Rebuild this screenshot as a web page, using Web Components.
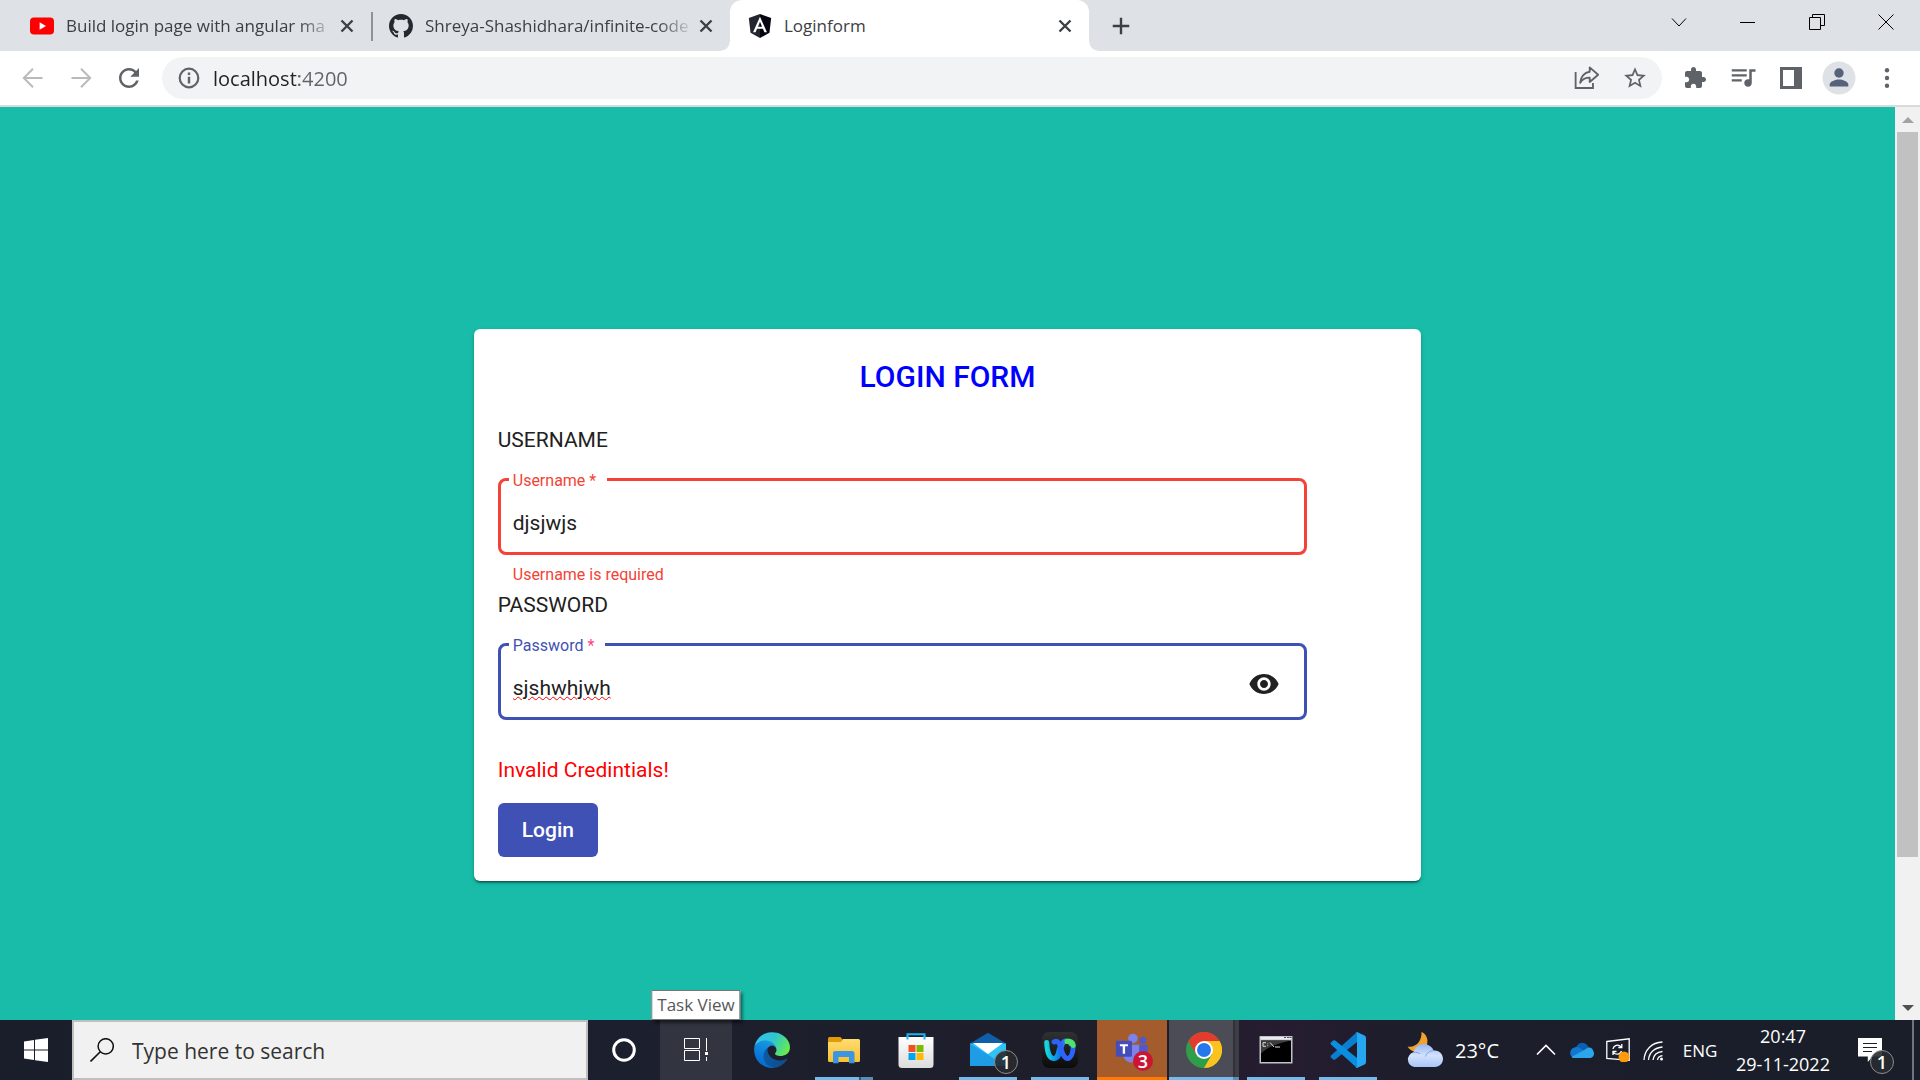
<!DOCTYPE html>
<html lang="en">
<head>
<meta charset="utf-8">
<title>Loginform</title>
<style>
  html, body { margin: 0; height: 100%; }
  body { display: flex; flex-direction: column; overflow: hidden; font-family: "Open Sans", "Noto Sans", sans-serif; }
</style>
</head>
<body>
<tab-strip>
  <browser-tab icon="youtube" label="Build login page with angular ma" faded></browser-tab>
  <browser-tab icon="github" label="Shreya-Shashidhara/infinite-code" divided faded></browser-tab>
  <browser-tab icon="angular" label="Loginform" active></browser-tab>
</tab-strip>
<browser-toolbar></browser-toolbar>
<page-view>
  <login-card>
    <span slot="title">LOGIN FORM</span>
    <outline-field heading="USERNAME" label="Username" value="djsjwjs" tone="error">Username is required</outline-field>
    <outline-field heading="PASSWORD" label="Password" value="sjshwhjwh" tone="focus"><ui-icon slot="suffix" name="eye" size="32"></ui-icon></outline-field>
    <span slot="error">Invalid Credintials!</span>
    <span slot="action">Login</span>
  </login-card>
</page-view>
<task-bar>
  <task-item icon="cortana" label="Cortana"></task-item>
  <task-item icon="taskview" label="Task View" state="hover" tip="Task View"></task-item>
  <task-item slot="apps" icon="edge" label="Edge"></task-item>
  <task-item slot="apps" icon="explorer" label="File Explorer" state="stack"></task-item>
  <task-item slot="apps" icon="store" label="Store"></task-item>
  <task-item slot="apps" icon="mail" label="Mail" state="open" badge="1"></task-item>
  <task-item slot="apps" icon="webex" label="Webex" state="open"></task-item>
  <task-item slot="apps" icon="teams" label="Teams" state="alert" badge="3"></task-item>
  <task-item slot="apps" icon="chrome" label="Chrome" state="current"></task-item>
  <task-item slot="apps" icon="cmd" label="Command Prompt" state="open"></task-item>
  <task-item slot="apps" icon="vscode" label="Visual Studio Code" state="open"></task-item>
</task-bar>
<script>
const line = (w, d, extra = '') => `<path d="${d}" fill="none" stroke="currentColor" stroke-width="${w}" ${extra}/>`;
const ICONS = {
  youtube: ['0 0 24 24', '<rect x="0" y="3.5" width="24" height="17" rx="4" fill="#f00"/><path d="M9.6 8.2v7.6l6.4-3.8z" fill="#fff"/>'],
  github: ['0 0 16 16', '<path fill="#24292f" d="M8 0C3.58 0 0 3.58 0 8c0 3.54 2.29 6.53 5.47 7.59.4.07.55-.17.55-.38 0-.19-.01-.82-.01-1.49-2.01.37-2.53-.49-2.69-.94-.09-.23-.48-.94-.82-1.13-.28-.15-.68-.52-.01-.53.63-.01 1.08.58 1.23.82.72 1.21 1.87.87 2.33.66.07-.52.28-.87.51-1.07-1.78-.2-3.64-.89-3.64-3.95 0-.87.31-1.59.82-2.15-.08-.2-.36-1.02.08-2.12 0 0 .67-.21 2.2.82.64-.18 1.32-.27 2-.27s1.36.09 2 .27c1.53-1.04 2.2-.82 2.2-.82.44 1.1.16 1.92.08 2.12.51.56.82 1.27.82 2.15 0 3.07-1.87 3.75-3.65 3.95.29.25.54.73.54 1.48 0 1.07-.01 1.93-.01 2.2 0 .21.15.46.55.38A8.01 8.01 0 0 0 16 8c0-4.42-3.58-8-8-8z"/>'],
  angular: ['25 30 200 200', '<path fill="#23252f" d="M125 30 31.9 63.2 46.1 186.3 125 230z"/><path fill="#05060f" d="M125 30v200l78.9-43.7 14.2-123.1z"/><path fill="#fff" d="M125 52.1 66.8 182.6h21.7l11.7-29.2h49.4l11.7 29.2H183L125 52.1zm17 83.3h-34l17-40.9z"/>'],
  close: ['0 0 24 24', line(2.4, 'M6.5 6.5l11 11M17.5 6.5l-11 11')],
  plus: ['0 0 24 24', line(2.6, 'M12 3v18M3 12h18')],
  winChevron: ['0 0 16 16', line(1, 'M1 4.5 8 12l7-7.5')],
  winMin: ['0 0 16 16', '<path d="M0 8h15v1H0z"/>'],
  winMax: ['0 0 16 16', line(1, 'M.5 3.5h11v12h-11zM3.5 3.5v-3h12v11h-4')],
  winClose: ['0 0 16 16', line(1, 'M.5.5l15 15M15.5.5l-15 15')],
  back: ['0 0 24 24', line(2, 'M21.5 12H3M12 2.7 2.8 12l9.2 9.3')],
  forward: ['0 0 24 24', line(2, 'M2.5 12H21M12 2.7l9.2 9.3-9.2 9.3')],
  reload: ['0 0 24 24', '<path fill="currentColor" d="M17.65 6.35C16.2 4.9 14.21 4 12 4c-4.42 0-7.99 3.58-7.99 8s3.57 8 7.99 8c3.73 0 6.84-2.55 7.73-6h-2.08c-.82 2.33-3.04 4-5.65 4-3.31 0-6-2.69-6-6s2.69-6 6-6c1.66 0 3.14.69 4.22 1.78L13 11h7V4z"/>'],
  info: ['0 0 24 24', '<circle cx="12" cy="12" r="9.3" fill="none" stroke="currentColor" stroke-width="2.2"/><path fill="currentColor" d="M10.8 6.5h2.4v2.4h-2.4zM10.8 10.8h2.4v6.7h-2.4z"/>'],
  share: ['0 0 24 24', line(1.7, 'M1.5 6.5v14.7h16v-4.5') + line(1.7, 'M14.5 2.2 22.3 9l-7.8 6.7v-4C10.5 11.7 7.5 13 5.7 16.5c.3-5.5 3.8-9.6 8.8-10.3z', 'stroke-linejoin="round"')],
  star: ['0 0 24 24', '<path fill="currentColor" d="M22 9.24l-7.19-.62L12 2 9.19 8.63 2 9.24l5.46 4.73L5.82 21 12 17.27 18.18 21l-1.63-7.03L22 9.24zM12 15.4l-3.76 2.27 1-4.28-3.32-2.88 4.38-.38L12 6.1l1.71 4.04 4.38.38-3.32 2.88 1 4.28L12 15.4z"/>'],
  puzzle: ['0 0 24 24', '<path fill="currentColor" d="M20.5 11H19V7c0-1.1-.9-2-2-2h-4V3.5C13 2.12 11.88 1 10.5 1S8 2.12 8 3.5V5H4c-1.1 0-1.99.9-1.99 2v3.8H3.5c1.49 0 2.7 1.21 2.7 2.7s-1.21 2.7-2.7 2.7H2V20c0 1.1.9 2 2 2h3.8v-1.5c0-1.49 1.21-2.7 2.7-2.7s2.7 1.21 2.7 2.7V22H17c1.1 0 2-.9 2-2v-4h1.5c1.38 0 2.5-1.12 2.5-2.5S21.88 11 20.5 11z"/>'],
  music: ['0 1 24 24', '<path fill="currentColor" d="M15 6H3v1.7h12zM15 10H3v1.7h12zM3 15.7h8V14H3zM17 6v8.18c-.31-.11-.65-.18-1-.18-1.66 0-3 1.34-3 3s1.34 3 3 3 3-1.34 3-3V8h3V6z"/>'],
  panel: ['0 0 22 22', '<path fill="currentColor" fill-rule="evenodd" d="M0 0h22v22H0zM3 3v16h11V3z"/>'],
  avatar: ['0 0 34 34', '<circle cx="17" cy="17" r="16.5" fill="#dee1e6"/><g fill="#56617a"><circle cx="17" cy="12" r="4.7"/><path d="M7.7 25.5v-2c0-3 6-5 9.3-5s9.3 2 9.3 5v2z"/></g>'],
  dots: ['0 0 24 24', '<g fill="currentColor"><circle cx="12" cy="4.3" r="2.2"/><circle cx="12" cy="12" r="2.2"/><circle cx="12" cy="19.7" r="2.2"/></g>'],
  eye: ['0 0 24 24', '<path fill="#212121" d="M12 4.5C7 4.5 2.73 7.61 1 12c1.73 4.39 6 7.5 11 7.5s9.27-3.11 11-7.5c-1.73-4.39-6-7.5-11-7.5zM12 17c-2.76 0-5-2.24-5-5s2.24-5 5-5 5 2.24 5 5-2.24 5-5 5zm0-8c-1.66 0-3 1.34-3 3s1.34 3 3 3 3-1.34 3-3-1.34-3-3-3z"/>'],
  windows: ['0 0 24 24', '<path fill="#fff" d="M0 3.4 10 2v9.4H0zM11 1.8 24 0v11.4H11zM0 12.4h10V22L0 20.6zM11 12.4h13V24l-13-1.8z"/>'],
  search: ['0 0 24 24', '<circle cx="15.7" cy="8.3" r="7.6" fill="none" stroke="#111" stroke-width="1.5"/><path d="M10.3 13.7.5 23.5" stroke="#111" stroke-width="1.6"/>'],
  cortana: ['0 0 36 36', '<circle cx="18" cy="18" r="10.3" fill="none" stroke="#fff" stroke-width="3"/>'],
  taskview: ['0 0 36 36', '<path fill="none" stroke="#fff" d="M6.5 6.5h15v10h-15zM6.500 18.5h15v10h-15zM28.5 6v13M28.5 25v4"/><path fill="#fff" d="M27 20h3v3h-3z"/>'],
  edge: ['4 4 257 257', '<defs><linearGradient id="a" x1="0" x2="1"><stop offset="0" stop-color="#0c59a4"/><stop offset="1" stop-color="#114a8b"/></linearGradient><linearGradient id="b" x1=".6" x2=".3" y2="1"><stop offset="0" stop-color="#1b9de2"/><stop offset=".6" stop-color="#0a79d8"/><stop offset="1" stop-color="#0668c4"/></linearGradient><linearGradient id="c" x1="0" y1=".2" x2="1" y2=".6"><stop offset="0" stop-color="#35c1f1"/><stop offset=".5" stop-color="#2fc5cf"/><stop offset="1" stop-color="#66eb4e"/></linearGradient></defs><path fill="url(#a)" d="M235.68 195.46a93.73 93.73 0 0 1-10.54 4.71 101.87 101.87 0 0 1-35.9 6.46c-47.32 0-88.54-32.55-88.54-74.32A31.48 31.48 0 0 1 117.13 105c-42.8 1.8-53.8 46.4-53.8 72.53 0 73.88 68.09 81.37 82.76 81.37 7.91 0 19.84-2.3 27-4.56l1.31-.44a128.34 128.34 0 0 0 66.6-52.8 4 4 0 0 0-5.32-5.64z"/><path fill="url(#b)" d="M110.34 246.34A79.2 79.2 0 0 1 87.6 225a80.72 80.72 0 0 1 29.53-120c3.12-1.47 8.45-4.13 15.54-4a32.35 32.35 0 0 1 25.69 13 31.88 31.88 0 0 1 6.36 18.66c0-.21 24.46-79.6-80-79.6-43.9 0-80 41.66-80 78.21a130.15 130.15 0 0 0 12.11 56 128 128 0 0 0 156.38 67.11 75.55 75.55 0 0 1-62.78-8z"/><path fill="url(#c)" d="M156.94 153.78c-.81 1.05-3.3 2.5-3.3 5.66 0 2.61 1.7 5.12 4.72 7.23 14.38 10 41.49 8.68 41.56 8.68a59.56 59.56 0 0 0 30.27-8.35 61.38 61.38 0 0 0 30.43-52.88c.26-22.41-8-37.31-11.34-43.91-21.19-41.44-66.92-65.28-116.65-65.28a128 128 0 0 0-128 126.2c.48-36.54 36.8-66.05 80-66.05 3.5 0 23.46.34 42 10.07 16.34 8.58 24.9 18.94 30.85 29.21 6.18 10.67 7.28 24.15 7.28 29.52s-2.74 13.33-7.82 19.9z"/>'],
  explorer: ['0 0 36 36', '<defs><linearGradient id="a" x2="0" y2="1"><stop stop-color="#ffdc70"/><stop offset="1" stop-color="#f8c033"/></linearGradient></defs><path fill="#e29a09" d="M2 6.5Q2 5 3.5 5h11l2.5 3v4H2z"/><path fill="url(#a)" d="M2 10h13l2-3h15.5q1.5 0 1.5 1.5v20q0 1.5-1.5 1.5h-29Q2 30 2 28.5z"/><path fill="#3a96e0" d="M7 31.3V21q0-2 2-2h17q2.5 0 2.5 2v10.3h-5.5V25h-10.5v6.3z"/>'],
  store: ['0 0 36 36', '<defs><linearGradient id="a" x2="0" y2="1"><stop stop-color="#fff"/><stop offset="1" stop-color="#dcdcdc"/></linearGradient></defs><path fill="none" stroke="#1fb4ef" stroke-width="2" d="M9.5 7.5V2.2h17v5.3"/><path fill="url(#a)" d="M.5 5h35v27.5q0 3.5-3.5 3.5H4Q.5 36 .5 32.5z"/><path fill="none" stroke="#1fb4ef" stroke-width="2" d="M9.5 7.5V4M26.5 7.5V4"/><path fill="#f25022" d="M10.5 13h7v7h-7z"/><path fill="#7fba00" d="M18.5 13h7v7h-7z"/><path fill="#00a4ef" d="M10.5 21h7v7h-7z"/><path fill="#ffb900" d="M18.5 21h7v7h-7z"/>'],
  mail: ['0 0 36 36', '<path fill="#0f5ea8" d="M0 11.5 18 .8l18 10.7-6 5H6z"/><path fill="#2fc4f5" d="M36 11.5V34H0V11.5z"/><path fill="#fff" d="M3 11h30L18 22z"/><path fill="#1e9ce6" d="M0 11.5 36 34H0z"/>'],
  webex: ['0 0 36 36', '<defs><linearGradient id="g" x2="0" y2="1"><stop stop-color="#303132"/><stop offset="1" stop-color="#0b0b0c"/></linearGradient><linearGradient id="a" x2="1" y2="0"><stop stop-color="#16d5dc"/><stop offset="1" stop-color="#0a7bf0"/></linearGradient><linearGradient id="b" x2="1" y2="0"><stop stop-color="#1d55e8"/><stop offset=".6" stop-color="#3277ff"/><stop offset="1" stop-color="#4ee36a"/></linearGradient></defs><rect width="36" height="36" rx="7" fill="url(#g)"/><g fill="none" stroke-width="5" stroke-linecap="round"><path stroke="url(#b)" d="M14 26c5-1 4-17 10-17 2.5 0 4.5 1.5 5 3"/><path stroke="url(#a)" d="M4.700 10.5C5 18 7 26.5 11.5 26.5c4.5 0 5-6 6-10"/><path stroke="#2b63fb" d="M12 10c5-2.5 6 3 7.5 8.5S24 27 26.5 26.3C30 25 31 19 31.2 14"/><path stroke="#4ee36a" d="M25 9.5c3-.8 6 .5 6.2 4"/></g>'],
  teams: ['0 0 40 38', '<circle cx="21" cy="6" r="5.3" fill="#7b83eb"/><circle cx="32" cy="8" r="3.9" fill="#5059c9"/><path fill="#5059c9" d="M26 13h11.5v10q0 5-5.5 5h-6z"/><path fill="#7b83eb" d="M10 13h18v11q0 8-9 9-8-1-9-9z"/><rect x="2" y="8.5" width="18" height="18" rx="1.5" fill="#454dbb"/><path fill="#fff" d="M6.500 12.5h9v2.3h-3.2V23H9.7v-8.2H6.5z"/>'],
  chrome: ['0 0 48 48', '<circle cx="24" cy="24" r="24" fill="#2f9e4a"/><path fill="#e33b2e" d="M24 24 3.2 12A24 24 0 0 1 44.8 12z"/><path fill="#e33b2e" d="M3.2 12 13.6 30 24 24V12z"/><path fill="#fcc31e" d="M24 12h20.8A24 24 0 0 1 24 48l10.4-18z"/><circle cx="24" cy="24" r="12" fill="#fff"/><circle cx="24" cy="24" r="9.3" fill="#2577ec"/>'],
  cmd: ['0 0 36 36', '<path fill="#bfc3c8" d="M1.5 4h33v27.5h-33z"/><path fill="#e9ebee" d="M2.5 5h31v2.5h-31z"/><path fill="#000" d="M3 8.5h30V30H3z"/><path fill="#3b3b3b" d="M3 8.5h30c-14 3-24 7-30 13z"/><path fill="none" stroke="#ddd" stroke-width="1" d="M8 10.7H5v3.6h3M9.8 11.5v.8M9.8 13.3v.8M12 10.5l4 4.5M17 15h5"/><path stroke="#456" d="M26 5.5h2M29 5.5h2M31.5 5.5h2"/>'],
  vscode: ['0 0 36 36', '<path fill="#0a7fd0" d="M27 0 1 23.5q-1 1 0 2l2.2 2q1 .7 2 0L27 10z"/><path fill="#0a8ee0" d="M27 36 1 12.5q-1-1 0-2l2.2-2q1-.7 2 0L27 26z"/><path fill="#25a8f2" d="M27 0l7.5 3.5Q36 4.2 36 6v24q0 1.800-1.500 2.500L27 36q-1 0-1.500-1 1.500 1 1.500-1V2q0-2-1.500-1z"/>'],
  weather: ['0 0 36 36', '<defs><linearGradient id="a" x2="0" y2="1"><stop stop-color="#96b5f4"/><stop offset=".5" stop-color="#d3e2fc"/><stop offset="1" stop-color="#a9c5f8"/></linearGradient></defs><path fill="#f0a22c" d="M14.5 0c9 3.5 8 19-4 20C6 20 2.500 18 .5 14.500 9 16 15 9 14.5 0z"/><path fill="url(#a)" d="M7.5 35a7.5 7.5 0 0 1-1-14.7C8 15 12 12 16.5 12c5 0 9 3 10 6.5 5.5-.8 9.5 3.5 9.5 8.3 0 4.7-3.5 8.2-8 8.2z"/><path fill="none" stroke="#7e9fe6" stroke-width="1" d="M6.5 20.5c3-.7 5 .2 6.5 1.5M26.5 18.5c-4 .5-7 2.5-8 6"/>'],
  caret: ['0 0 24 24', '<path fill="none" stroke="#fff" stroke-width="1.6" d="m3 16.5 9-9 9 9"/>'],
  onedrive: ['0 0 24 24', '<path fill="#0a5fb4" d="M6 9.5C8 4 15 2.5 18.5 9l-2 5-6 1z"/><path fill="#1278cf" d="M4.5 20C-1 19.5-1.5 11 4.5 9.5c3-1 5 0 7 1.5l6 4z"/><path fill="#2ba6ea" d="M4 20c-1.2 0-2-.5-2.500-1L16 11c3-3 7-.5 7 1.5 2 2.5 1 7-2.5 7.5z"/>'],
  sync: ['0 0 24 24', '<path fill="none" stroke="#fff" stroke-width="1.3" d="M.8 3.5 23.2.8v21.5L.8 20.5zM7 11c.5-3 4-5 7-3l1.5 1.300M15.8 6v3.5h-3.500M15.5 13c-.8 3-4 4-7 2.5L7 14M7 17V13.500h3.500"/><circle cx="18" cy="19" r="5.5" fill="#ff9a0a"/>'],
  wifi: ['0 0 24 24', '<g fill="none" stroke="#fff" stroke-width="1.3"><path d="M2 22C2.5 12 9.5 4.5 20.5 4"/><path d="M6.5 22c.5-7 6-12.5 14-13"/><path d="M11 22c.5-4.5 4-8 9.5-8.500"/><path d="M15.5 22c.3-2.3 2-4 5-4.3"/></g><circle cx="19.5" cy="21" r="1.5" fill="#fff"/>'],
  notes: ['0 0 24 24', '<path fill="#fff" d="M0 0h24v18.5h-9.500L9.8 24V18.5H0z"/><path stroke="#1c1f2b" stroke-width="1.2" d="M5 5.5h14M5 9.5h14M5 13.5h9"/>'],
  up: ['0 0 12 6', '<path fill="#a3a3a3" d="M0 6 6 0l6 6z"/>'],
  down: ['0 0 12 6', '<path fill="#505050" d="M0 0h12L6 6z"/>']
};
const RESET = `<style>
  :host, *, *::before, *::after { box-sizing: border-box; }
  button, input { font: inherit; color: inherit; border: 0; padding: 0; margin: 0; background: none; outline: 0; }
  button { display: flex; align-items: center; justify-content: center; }
</style>`;
function define(name, view) {
  customElements.define(name, class extends HTMLElement {
    connectedCallback() {
      if (this.shadowRoot) return;
      const tpl = document.createElement('template');
      tpl.innerHTML = RESET + view(key => this.getAttribute(key) || '');
      this.attachShadow({ mode: 'open' }).append(tpl.content.cloneNode(true));
    }
  });
}
const icon = (name, size) => `<ui-icon name="${name}" size="${size}"></ui-icon>`;
const iconButton = (name, size, label, cls = '') => `<button type="button" class="${cls}" aria-label="${label}">${icon(name, size)}</button>`;

define('ui-icon', at => {
  const [box, art] = ICONS[at('name')];
  return `<style>:host { display: block; flex: none; width: ${at('size')}px; } svg { display: block; width: 100%; }</style>
  <svg viewBox="${box}" aria-hidden="true">${art}</svg>`;
});

define('tab-strip', () => `<style>
  :host { display: flex; flex: none; height: 51px; padding-left: 12px; background: #dee1e6; color: #3c4043; }
  .new { width: 64px; }
  .window { display: flex; margin-left: auto; height: 43px; color: #000; }
  .window button { width: 69px; }
</style>
<slot></slot>${iconButton('plus', 22, 'New tab', 'new')}
<div class="window">${iconButton('winChevron', 16, 'Search tabs')}${iconButton('winMin', 16, 'Minimize')}${iconButton('winMax', 16, 'Restore')}${iconButton('winClose', 16, 'Close window')}</div>`);

define('browser-tab', at => `<style>
  :host { display: flex; flex: 0 1 359px; min-width: 0; align-items: center; padding: 0 12px 0 18px; position: relative; color: #3c4043; }
  :host([active]) { background: #fff; border-radius: 12px 12px 0 0; }
  :host([active])::before, :host([active])::after { content: ""; position: absolute; bottom: 0; width: 9px; height: 9px; }
  :host([active])::before { right: 100%; background: radial-gradient(circle at 0 0, #dee1e6 8px, #fff 9px); }
  :host([active])::after { left: 100%; background: radial-gradient(circle at 100% 0, #dee1e6 8px, #fff 9px); }
  :host([divided])::before { content: ""; position: absolute; left: 0; top: 12px; width: 2px; height: 29px; background: #8f9297; }
  span { flex: 1; min-width: 0; margin: 0 0 0 12px; white-space: nowrap; font-size: 17px; line-height: 24px; }
  :host([faded]) span { mask-image: linear-gradient(to left, transparent, #000 36px); }
</style>
${icon(at('icon'), 24)}<span>${at('label')}</span>${iconButton('close', 24, 'Close tab')}`);

define('browser-toolbar', () => `<style>
  :host { display: flex; flex: none; align-items: center; height: 56px; padding: 0 9px; border-bottom: 2px solid #d9dadb; background: #fff; color: #5f6368; }
  button { width: 48px; height: 42px; }
  .off { color: #bababd; }
  .address { flex: 1; display: flex; align-items: center; height: 42px; margin: 0 9px; padding: 0 3px 0 15px; border-radius: 21px; background: #f1f3f4; }
  input { flex: 1; min-width: 0; margin-left: 12px; height: 32px; font-size: 20px; color: transparent; caret-color: #202124;
    background: linear-gradient(to right, #202124 86px, #5f6368 86px); background-clip: text; -webkit-background-clip: text; }
</style>
${iconButton('back', 24, 'Back', 'off')}${iconButton('forward', 24, 'Forward', 'off')}${iconButton('reload', 30, 'Reload')}
<div class="address">${icon('info', 24)}<input type="text" value="localhost:4200" aria-label="Address" spellcheck="false">
${iconButton('share', 26, 'Share')}${iconButton('star', 26, 'Bookmark')}</div>
${iconButton('puzzle', 24, 'Extensions')}${iconButton('music', 30, 'Media')}${iconButton('panel', 22, 'Side panel')}${iconButton('avatar', 34, 'Profile')}${iconButton('dots', 24, 'Menu')}`);

define('page-view', () => `<style>
  :host { display: flex; flex: 1; min-height: 0; background: #18bca9; font-family: Roboto, sans-serif; }
  main { flex: 1; min-width: 0; overflow: hidden; padding-top: 222px; }
</style>
<main><slot></slot></main><scroll-rail></scroll-rail>`);

define('scroll-rail', () => `<style>
  :host { display: flex; flex: 0 0 25px; flex-direction: column; align-items: stretch; background: #f1f1f1; }
  .end { display: flex; height: 25px; align-items: center; justify-content: center; }
  .track { flex: 1; padding: 0 2px; }
  .thumb { height: 84%; background: #c1c1c1; }
</style>
<div class="end">${icon('up', 12)}</div><div class="track"><div class="thumb"></div></div><div class="end">${icon('down', 12)}</div>`);

define('login-card', () => `<style>
  :host { display: block; width: 50%; margin: 0 auto; padding: 24px; background: #fff; border-radius: 6px; color: #212121;
    box-shadow: 0 3px 2px -2px rgba(0,0,0,.4), 0 2px 2px rgba(0,0,0,.2), 0 2px 5px rgba(0,0,0,.14); font-size: 21px; line-height: 30px; }
  h1 { margin: 0 0 24px; font-size: 30px; line-height: 48px; font-weight: 500; text-align: center; color: #00f; }
  form { display: flex; flex-direction: column; align-items: flex-start; }
  p { margin: 0 0 18px; color: #f00; }
  button { height: 54px; padding: 0 24px; border-radius: 6px; background: #3f51b5; color: #fff; font-weight: 500; }
</style>
<h1><slot name="title"></slot></h1>
<form><slot></slot><p><slot name="error"></slot></p><button type="button"><slot name="action"></slot></button></form>`);

define('outline-field', at => `<style>
  :host { display: block; width: 90%; --line: #3f51b5; --star: #ff4081; }
  :host([tone="error"]) { --line: #f44336; --star: #f44336; }
  h2 { margin: 0; font-size: 21px; font-weight: 400; line-height: 30px; }
  fieldset { display: flex; align-items: center; margin: 10px 0 0; min-width: 0; height: 90px; padding: 0 24px 0 12px; border: 3px solid var(--line); border-radius: 8px; }
  legend { height: 28px; margin-left: -4px; padding: 4px 11px 0 4px; font-size: 16px; line-height: 24px; color: var(--line); }
  b { font-weight: 400; color: var(--star); }
  input { flex: 1; min-width: 0; height: 30px; }
  :host([tone="focus"]) input { text-decoration: underline wavy #f00 1px; text-underline-offset: 1px; }
  ::slotted(ui-icon) { margin-bottom: 8px; }
  .hint { height: 35px; padding: 8px 15px 0; font-size: 16px; line-height: 24px; color: var(--line); }
</style>
<h2>${at('heading')}</h2>
<fieldset><legend><label for="box">${at('label')} <b>*</b></label></legend>
<input id="box" type="text" value="${at('value')}" spellcheck="false"><slot name="suffix"></slot></fieldset>
<div class="hint"><slot></slot></div>`);

define('task-bar', () => `<style>
  :host { display: flex; flex: none; height: 60px; color: #fff; font-size: 17px; background: linear-gradient(to right, #1a1e2a 0, #1c1f2d 35%, #1f1e2b 58%, #261c30 67%, #1c1e2b 74%, #191e29 100%); }
  .start { width: 72px; }
  label { display: flex; align-items: center; flex: 0 1 516px; padding: 0 16px; border: 2px solid #bfbfbf; background: #f1f1f1; }
  label input { flex: 1; min-width: 0; margin-left: 18px; height: 40px; padding-top: 2px; font-size: 21px; color: #222; }
  label input::placeholder { color: #333; opacity: 1; }
  .apps { display: flex; margin-left: 4px; }
  .weather { display: flex; align-items: center; gap: 12px; margin-left: 23px; font-size: 20px; }
  .tray { display: flex; align-items: stretch; margin-left: auto; }
  .tray button { width: 36px; }
  .tray .lang { width: 56px; }
  .tray .clock { width: 110px; flex-direction: column; font-size: 18px; line-height: 28px; }
  .tray .notes { width: 64px; position: relative; }
  .edge { width: 2px; margin: 0 6px 0 10px; background: #70747c; }
  count-badge { position: absolute; left: 32px; top: 30px; }
</style>
<button class="start" type="button" aria-label="Start">${icon('windows', 24)}</button>
<label>${icon('search', 24)}<input type="text" placeholder="Type here to search" aria-label="Search"></label>
<slot></slot><div class="apps"><slot name="apps"></slot></div>
<button class="weather" type="button">${icon('weather', 36)}<span>23°C</span></button>
<div class="tray">${iconButton('caret', 24, 'Hidden icons')}${iconButton('onedrive', 24, 'OneDrive')}${iconButton('sync', 24, 'Update')}${iconButton('wifi', 24, 'Network')}
<button type="button" class="lang">ENG</button>
<button type="button" class="clock"><span>20:47</span><span>29-11-2022</span></button>
<button type="button" class="notes" aria-label="Notifications">${icon('notes', 24)}<count-badge>1</count-badge></button><div class="edge"></div></div>`);

define('count-badge', () => `<style>
  :host { display: flex; align-items: center; justify-content: center; width: 24px; height: 24px; border: 1px solid #8b8d90; border-radius: 50%;
    background: rgba(40,42,46,.9); color: #fff; font-size: 18px; font-weight: 600; line-height: 22px; }
  :host([red]) { width: 20px; height: 20px; border: 0; background: #cc1433; }
</style><slot></slot>`);

define('task-item', at => `<style>
  :host { display: block; flex: none; width: 72px; position: relative; }
  button { width: 100%; height: 100%; }
  :host([state="hover"]) { background: #32343f; }
  :host([state="alert"]) { background: linear-gradient(#a45c2c, #a45c2c) 1px 0 / 70px 100% no-repeat; }
  :host([state="current"]) { background: linear-gradient(to right, #4b4c56 64px, #303139 64px 66px, #3d3e45 66px) 1px 0 / 70px 100% no-repeat; }
  i { position: absolute; bottom: 0; left: 7px; right: 7px; height: 3px; display: none; background: #76b9ed; }
  :host([state="open"]) i, :host([state="stack"]) i, :host([state="alert"]) i, :host([state="current"]) i { display: block; }
  :host([state="alert"]) i { left: 1px; right: 1px; background: #ff7800; }
  :host([state="current"]) i { left: 1px; right: 1px; background: linear-gradient(to right, #76b9ed 64px, #5b8cb4 64px); }
  :host([state="stack"]) i { background: linear-gradient(to right, #76b9ed 44px, #3b5872 44px 46px, #5b8cb4 46px); }
  count-badge { position: absolute; left: 42px; top: 30px; }
  count-badge[red] { left: 37px; top: 31px; }
  .tip { position: absolute; bottom: 60px; left: 50%; transform: translateX(-50%); margin: 0; height: 30px; padding: 0 5px; white-space: nowrap;
    border: 1px solid #767676; background: #fff; color: #575757; font-size: 17px; line-height: 28px; box-shadow: 3px 3px 3px rgba(0,0,0,.5); }
</style>
<button type="button" aria-label="${at('label')}">${icon(at('icon'), 36)}</button><i></i>
${at('badge') ? `<count-badge ${at('state') === 'alert' ? 'red' : ''}>${at('badge')}</count-badge>` : ''}
${at('tip') ? `<div class="tip" role="tooltip">${at('tip')}</div>` : ''}`);
</script>
</body>
</html>
